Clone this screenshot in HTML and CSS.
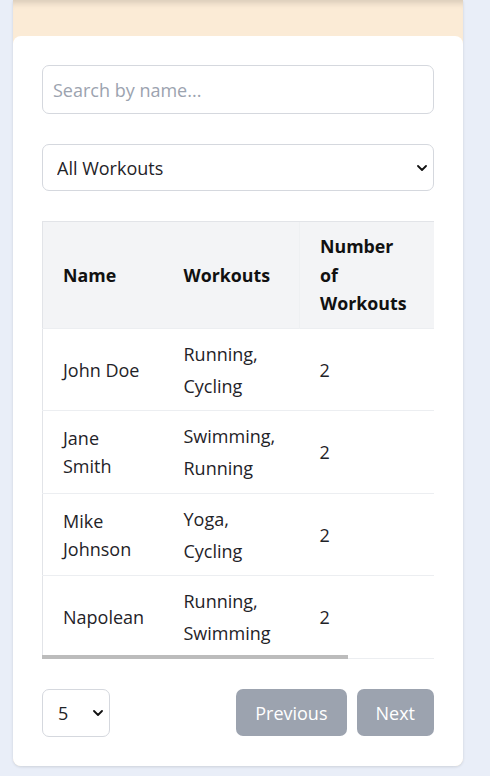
FILE: index.html
```html
<!DOCTYPE html>
<html lang="en">
<head>
<meta charset="utf-8">
<title>Workouts</title>
<link rel="stylesheet" href="styles.css">
</head>
<body>
<div class="panel">
  <div class="card">
    <input class="search" type="text" placeholder="Search by name...">
    <div class="select-box filter-box">
      <select class="filter">
        <option>All Workouts</option>
        <option>Running</option>
        <option>Cycling</option>
        <option>Swimming</option>
        <option>Yoga</option>
      </select>
      <svg class="chev" viewBox="0 0 10 6" aria-hidden="true"><path d="M1 1 L5 5 L9 1" fill="none" stroke="#111" stroke-width="1.8" stroke-linecap="round" stroke-linejoin="round"/></svg>
    </div>
    <div class="table-wrap">
      <div class="table-scroll">
        <table class="users">
          <colgroup>
            <col class="c-name">
            <col class="c-workouts">
            <col class="c-count">
            <col class="c-extra">
          </colgroup>
          <thead>
            <tr>
              <th>Name</th>
              <th>Workouts</th>
              <th class="count-head">Number of Workouts</th>
              <th></th>
            </tr>
          </thead>
          <tbody>
            <tr><td>John Doe</td><td class="workouts">Running, Cycling</td><td>2</td><td></td></tr>
            <tr><td>Jane Smith</td><td class="workouts">Swimming, Running</td><td>2</td><td></td></tr>
            <tr><td>Mike Johnson</td><td class="workouts">Yoga, Cycling</td><td>2</td><td></td></tr>
            <tr><td>Napolean</td><td class="workouts">Running, Swimming</td><td>2</td><td></td></tr>
          </tbody>
        </table>
      </div>
    </div>
    <div class="pager">
      <div class="select-box per-box">
        <select class="per-page">
          <option>5</option>
          <option>10</option>
          <option>20</option>
        </select>
        <svg class="chev" viewBox="0 0 10 6" aria-hidden="true"><path d="M1 1 L5 5 L9 1" fill="none" stroke="#111" stroke-width="1.8" stroke-linecap="round" stroke-linejoin="round"/></svg>
      </div>
      <div class="pager-buttons">
        <button class="btn" disabled>Previous</button>
        <button class="btn" disabled>Next</button>
      </div>
    </div>
  </div>
</div>
</body>
</html>
```

FILE: styles.css
```css
html, body {
  margin: 0;
  padding: 0;
}
body {
  background: #e9eef8;
  font-family: "Open Sans", "Noto Sans", sans-serif;
  color: #1f2328;
  height: 776px;
  overflow: hidden;
}
.panel {
  margin-left: 13px;
  width: 450px;
  padding-top: 36px;
  background: #fbebd6;
  box-shadow: inset 0 8px 6px -5px rgba(0, 0, 0, 0.14), 0 1px 3px rgba(0, 0, 0, 0.12);
  border-radius: 0 0 8px 8px;
}
.card {
  background: #ffffff;
  border-radius: 8px;
  padding: 29px 29px 29px;
  display: flex;
  flex-direction: column;
}
.search {
  box-sizing: border-box;
  width: 100%;
  height: 49px;
  border: 1px solid #d5d8de;
  border-radius: 7px;
  padding: 0 10px;
  font-family: inherit;
  font-size: 18px;
  color: #1f2328;
  outline: none;
}
.search::placeholder {
  color: #9ca3af;
}
.select-box {
  position: relative;
}
.select-box .chev {
  position: absolute;
  top: 50%;
  width: 10px;
  height: 6px;
  margin-top: -3px;
  pointer-events: none;
}
.filter-box {
  margin-top: 30px;
}
.filter-box .chev {
  right: 7px;
}
.per-box .chev {
  right: 7px;
}
.filter,
.per-page {
  -webkit-appearance: none;
  appearance: none;
  box-sizing: border-box;
  border: 1px solid #d5d8de;
  border-radius: 7px;
  background: #fff;
  font-family: inherit;
  font-size: 18px;
  color: #1f2328;
  display: block;
}
.filter {
  width: 100%;
  height: 47px;
  padding: 0 24px 0 14px;
}
.table-wrap {
  position: relative;
  margin-top: 30px;
}
.table-wrap::after {
  content: "";
  position: absolute;
  left: 0;
  bottom: 0;
  width: 306px;
  height: 4px;
  background: #bcbcbc;
}
.table-scroll {
  overflow-x: auto;
  border-bottom: 1px solid #eceef1;
  scrollbar-width: none;
}
.table-scroll::-webkit-scrollbar {
  display: none;
}
.users {
  table-layout: fixed;
  width: 502px;
  border-collapse: collapse;
  border-left: 1px solid #e2e4e8;
  font-size: 18px;
}
.c-name { width: 121px; }
.c-workouts { width: 136px; }
.c-count { width: 128px; }
.c-extra { width: 117px; }
.users th {
  background: #f3f4f6;
  border-top: 1px solid #e2e4e8;
  text-align: left;
  font-weight: 700;
  font-size: 17.8px;
  color: #111111;
  line-height: 28.5px;
  padding: 10px 20px;
  vertical-align: middle;
}
.users th.count-head {
  border-left: 1px solid #eef0f2;
}
.users td {
  padding: 9px 20px 8.5px;
  line-height: 28px;
  border-top: 1px solid #eceef1;
  vertical-align: middle;
  color: #1f2328;
}
.users td.workouts {
  line-height: 32px;
}
.pager {
  margin-top: 30px;
  display: flex;
  justify-content: space-between;
  align-items: center;
}
.per-page {
  width: 68px;
  height: 48px;
  padding: 0 20px 0 15px;
}
.pager-buttons {
  display: flex;
  gap: 10px;
}
.btn {
  height: 47px;
  border: none;
  border-radius: 7px;
  background: #9ca3af;
  color: #ffffff;
  font-family: inherit;
  font-size: 18px;
  padding: 0 19px;
}
```
